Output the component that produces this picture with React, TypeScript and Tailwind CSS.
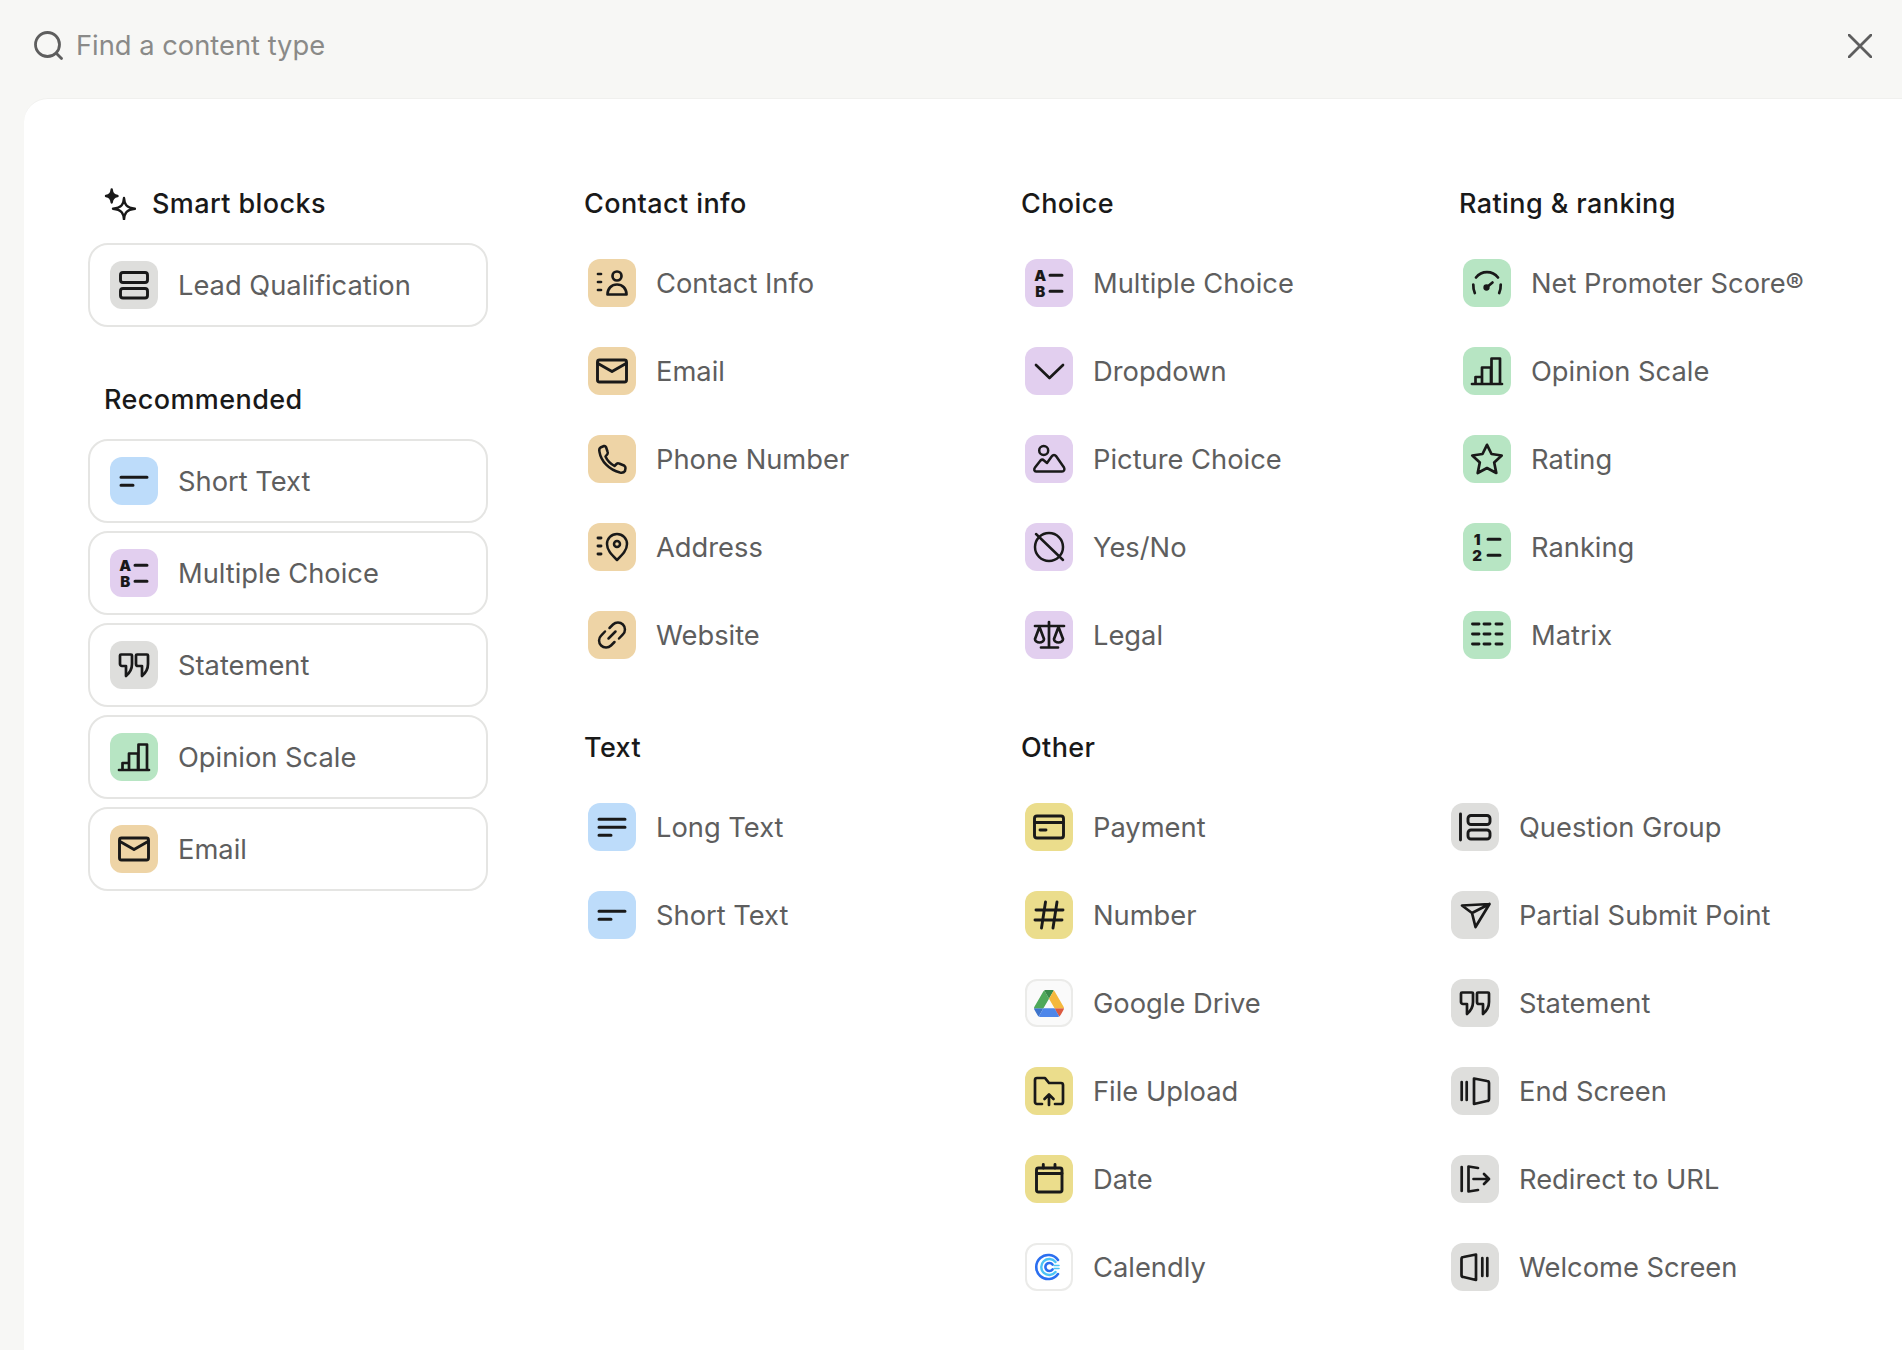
import React from 'react';

// tile colours per group
const BLUE = 'bg-[#bddcfa]';
const PURPLE = 'bg-[#e2cfef]';
const GREY = 'bg-[#dededc]';
const GREEN = 'bg-[#b7e5c3]';
const ORANGE = 'bg-[#eed4a6]';
const YELLOW = 'bg-[#ebdd8c]';
const PLAIN = 'bg-[#fafafa] border-2 border-[#ebebe9]';

function Glyph({ children, width = 2.7 }: { children: React.ReactNode; width?: number }) {
  return (
    <svg
      width="32"
      height="32"
      viewBox="0 0 32 32"
      fill="none"
      stroke="#191919"
      strokeWidth={width}
      strokeLinecap="round"
      strokeLinejoin="round"
      className="overflow-visible"
    >
      {children}
    </svg>
  );
}

const IconText = ({ x, y, children }: { x: number; y: number; children: string }) => (
  <text
    x={x}
    y={y}
    fontSize="15"
    fontWeight="900"
    fontFamily="Inter, sans-serif"
    textAnchor="middle"
    fill="#191919"
    stroke="none"
  >
    {children}
  </text>
);

const icons: Record<string, React.ReactNode> = {
  lead: (
    <Glyph width={2.9}>
      <rect x="2.5" y="3.5" width="27" height="10" rx="2.5" />
      <rect x="2.5" y="19.5" width="27" height="9.5" rx="2.5" />
    </Glyph>
  ),
  shortText: (
    <Glyph width={3}>
      <path d="M3 12.3H29M3 20.3H15" />
    </Glyph>
  ),
  longText: (
    <Glyph width={3}>
      <path d="M3 8.3H29M3 16.3H29M3 24.3H15" />
    </Glyph>
  ),
  multiple: (
    <Glyph width={3}>
      <IconText x={7.2} y={14}>A</IconText>
      <IconText x={7.2} y={30}>B</IconText>
      <path d="M17 8.3H29M17 24.3H29" />
    </Glyph>
  ),
  statement: (
    <Glyph>
      <path d="M3 5.5h10a1 1 0 0 1 1 1v8.5c0 5-3 9.5-6 12v-10H4a2 2 0 0 1-2-2V6.500a1 1 0 0 1 1-1z" />
      <path d="M19 5.500h10a1 1 0 0 1 1 1v8.500c0 5-3 9.500-6 12v-10h-4a2 2 0 0 1-2-2V6.500a1 1 0 0 1 1-1z" />
    </Glyph>
  ),
  opinion: (
    <Glyph>
      <path d="M1 29H31M4.5 29V22H11M11 29V12.5H20V29M20.5 29V3.5H29V29" />
    </Glyph>
  ),
  email: (
    <Glyph width={2.9}>
      <rect x="1.5" y="5" width="29" height="22" rx="2" />
      <path d="M2 8.5L16 16.5L30 8.5" />
    </Glyph>
  ),
  contact: (
    <Glyph>
      <path d="M2 7H5M2 15H5M2 23H5" />
      <circle cx="21" cy="9" r="4.5" />
      <path d="M11.5 27.5c0-6 4-10 9.5-10s9.500 4 9.500 10z" />
    </Glyph>
  ),
  phone: (
    <Glyph width={2.5}>
      <path d="M8 3L4.5 4.5C3 5.5 3 7 3.5 9C5 18 13 27 24 29.5C26.5 30 28 29.5 29 28L29.5 25C29.5 23.5 28.5 23 28 22.5L23 20.5C22 20 21 20.5 20.5 21L18.5 23C15 21 11 17 9.5 13.5L11.5 11C12 10 12 9.5 11.5 8.5L10 4C9.5 3 9 2.7 8 3Z" />
    </Glyph>
  ),
  address: (
    <Glyph width={2.5}>
      <path d="M2 7H5M2 15H5M2 23H5" strokeWidth={2.9} />
      <path d="M21 29C15 23 11 19 11 13a10 10 0 0 1 20 0C31 19 27 23 21 29Z" />
      <circle cx="21" cy="13" r="3" />
    </Glyph>
  ),
  website: (
    <Glyph width={2.5}>
      <path d="M13.5 9L17 5.5a7 7 0 0 1 9.9 9.9L23 19.5" />
      <path d="M18.5 23L15 26.5a7 7 0 0 1-9.9-9.9L9 12.5" />
      <path d="M12.5 19.5L19.5 12.5" />
    </Glyph>
  ),
  dropdown: (
    <Glyph>
      <path d="M3 10L16.5 23L30 10" />
    </Glyph>
  ),
  picture: (
    <Glyph width={2.5}>
      <circle cx="10.7" cy="7.5" r="4.5" />
      <path d="M3 28.5H29c2 0 3-2 2-4L23 13c-1-1.5-3-1.5-4 0L14 20L11 17.5c-1-1-2.5-1-3.5 0L2 24.5c-1.5 2-.5 4 1 4z" />
    </Glyph>
  ),
  yesNo: (
    <Glyph width={2.5}>
      <circle cx="16" cy="16" r="14" />
      <path d="M3 3L30 29" />
    </Glyph>
  ),
  legal: (
    <Glyph>
      <path d="M16 3V28.5M8 28.5H25M2 7H31" />
      <path d="M6.5 8L2 20a4.5 3.5 0 0 0 9 0Z" />
      <path d="M25.5 8L21 20a4.5 3.5 0 0 0 9 0Z" />
    </Glyph>
  ),
  nps: (
    <Glyph>
      <path d="M5 10.5A14 14 0 0 1 27 10.5" />
      <path d="M2.3 17.5C2.2 20 2.5 23 3.8 26M29.7 17.5C29.8 20 29.5 23 28.2 26" />
      <path d="M15.5 20.5L21.5 15.5" />
      <circle cx="15.5" cy="20.5" r="1.8" fill="#191919" />
    </Glyph>
  ),
  star: (
    <Glyph>
      <path d="M16 1.8L20.5 11L30.7 12.5L23.2 19.5L25.3 30L16 25L6.7 30L8.800 19.5L1.300 12.5L11.500 11Z" />
    </Glyph>
  ),
  ranking: (
    <Glyph width={3}>
      <IconText x={6.2} y={14}>1</IconText>
      <IconText x={6.2} y={30}>2</IconText>
      <path d="M17 8.3H29M17 24.3H29" />
    </Glyph>
  ),
  matrix: (
    <Glyph width={2.9}>
      <path d="M1.5 5H8M13 5H19M25 5H31M1.5 15H8M13 15H19M25 15H31M1.5 25H8M13 25H19M25 25H31" />
    </Glyph>
  ),
  payment: (
    <Glyph width={2.9}>
      <rect x="1.5" y="5" width="29" height="22" rx="2.5" />
      <path d="M2 11.5H30M7 19H13" />
    </Glyph>
  ),
  number: (
    <Glyph width={2.9}>
      <path d="M12.5 3L8.5 29M24 3L20 29M3 11H30M2 21H29" />
    </Glyph>
  ),
  drive: (
    <svg width="30" height="27" viewBox="0 0 87.3 78">
      <path d="m6.6 66.85 3.85 6.65c.8 1.4 1.95 2.5 3.3 3.3l13.75-23.8h-27.5c0 1.55.4 3.1 1.2 4.5z" fill="#3d74cb" />
      <path d="m43.65 25-13.75-23.8c-1.35.8-2.5 1.9-3.3 3.3l-25.4 44a9.06 9.06 0 0 0 -1.2 4.5h27.5z" fill="#4fa95a" />
      <path d="m73.55 76.8c1.35-.8 2.5-1.9 3.3-3.3l1.6-2.75 7.65-13.25c.8-1.4 1.2-2.95 1.2-4.5h-27.502l5.852 11.5z" fill="#db5a41" />
      <path d="m43.65 25 13.75-23.8c-1.35-.8-2.9-1.2-4.5-1.2h-18.5c-1.6 0-3.15.45-4.5 1.2z" fill="#3a8a4a" />
      <path d="m59.8 53h-32.3l-13.75 23.8c1.35.8 2.9 1.2 4.5 1.2h50.8c1.6 0 3.15-.45 4.5-1.2z" fill="#4d86ea" />
      <path d="m73.4 26.5-12.7-22c-.8-1.4-1.95-2.5-3.3-3.3l-13.75 23.8 16.15 28h27.45c0-1.55-.4-3.1-1.2-4.5z" fill="#f5b83d" />
    </svg>
  ),
  upload: (
    <Glyph>
      <path d="M9 29H4a2 2 0 0 1-2-2V5a2 2 0 0 1 2-2H12l4 5H28a2 2 0 0 1 2 2V27a2 2 0 0 1-2 2H22" />
      <path d="M16 30V20M11.5 24L16 19.5L20.5 24" />
    </Glyph>
  ),
  date: (
    <Glyph width={2.9}>
      <rect x="3.5" y="5" width="25.5" height="24" rx="2" />
      <path d="M3.5 10.5H29M10.3 1.5V5M22 1.5V5" />
    </Glyph>
  ),
  calendly: (
    <svg width="32" height="32" viewBox="0 0 32 32" fill="none" strokeLinecap="round">
      <path d="M25 9A12 12 0 1 0 25 23" stroke="#2b6ff0" strokeWidth="2.6" />
      <path d="M22.5 11A8 8 0 1 0 22.500 21" stroke="#4cc4f5" strokeWidth="2.4" />
      <path d="M19.5 13.5A4 4 0 1 0 19.500 18.500" stroke="#2b6ff0" strokeWidth="2.6" />
      <path d="M21 14.5H26M21 17.5H26" stroke="#4cc4f5" strokeWidth="1.6" />
    </svg>
  ),
  group: (
    <Glyph width={2.9}>
      <path d="M1.5 3V29" />
      <rect x="9" y="4.5" width="22" height="9" rx="3" />
      <rect x="9" y="19" width="22" height="9" rx="3" />
    </Glyph>
  ),
  partial: (
    <Glyph>
      <path d="M3 6.5L30.5 5L16.5 28L13 14ZM13 14L30.5 5" />
    </Glyph>
  ),
  end: (
    <Glyph>
      <path d="M2.7 7V25M7.7 7V25" />
      <path d="M15 3.5L28 6a2 2 0 0 1 2 2V24a2 2 0 0 1-2 2L15 29Z" />
    </Glyph>
  ),
  redirect: (
    <Glyph>
      <path d="M2.7 4V28" />
      <path d="M19 5L9.5 3.5V28.5L19 27" />
      <path d="M14.5 16H30M25 11L30 16L25 21" />
    </Glyph>
  ),
  welcome: (
    <Glyph>
      <path d="M17 3.5L4.5 6a2 2 0 0 0-2 2V24a2 2 0 0 0 2 2L17 29Z" />
      <path d="M23.3 7V25M28.3 7V25" />
    </Glyph>
  ),
};

type Block = { label: string; icon: string; tone: string };

const recommended: Block[] = [
  { label: 'Short Text', icon: 'shortText', tone: BLUE },
  { label: 'Multiple Choice', icon: 'multiple', tone: PURPLE },
  { label: 'Statement', icon: 'statement', tone: GREY },
  { label: 'Opinion Scale', icon: 'opinion', tone: GREEN },
  { label: 'Email', icon: 'email', tone: ORANGE },
];

const contactInfo: Block[] = [
  { label: 'Contact Info', icon: 'contact', tone: ORANGE },
  { label: 'Email', icon: 'email', tone: ORANGE },
  { label: 'Phone Number', icon: 'phone', tone: ORANGE },
  { label: 'Address', icon: 'address', tone: ORANGE },
  { label: 'Website', icon: 'website', tone: ORANGE },
];

const choice: Block[] = [
  { label: 'Multiple Choice', icon: 'multiple', tone: PURPLE },
  { label: 'Dropdown', icon: 'dropdown', tone: PURPLE },
  { label: 'Picture Choice', icon: 'picture', tone: PURPLE },
  { label: 'Yes/No', icon: 'yesNo', tone: PURPLE },
  { label: 'Legal', icon: 'legal', tone: PURPLE },
];

const rating: Block[] = [
  { label: 'Net Promoter Score®', icon: 'nps', tone: GREEN },
  { label: 'Opinion Scale', icon: 'opinion', tone: GREEN },
  { label: 'Rating', icon: 'star', tone: GREEN },
  { label: 'Ranking', icon: 'ranking', tone: GREEN },
  { label: 'Matrix', icon: 'matrix', tone: GREEN },
];

const text: Block[] = [
  { label: 'Long Text', icon: 'longText', tone: BLUE },
  { label: 'Short Text', icon: 'shortText', tone: BLUE },
];

const otherLeft: Block[] = [
  { label: 'Payment', icon: 'payment', tone: YELLOW },
  { label: 'Number', icon: 'number', tone: YELLOW },
  { label: 'Google Drive', icon: 'drive', tone: PLAIN },
  { label: 'File Upload', icon: 'upload', tone: YELLOW },
  { label: 'Date', icon: 'date', tone: YELLOW },
  { label: 'Calendly', icon: 'calendly', tone: 'bg-white border-2 border-[#ebebe9]' },
];

const otherRight: Block[] = [
  { label: 'Question Group', icon: 'group', tone: GREY },
  { label: 'Partial Submit Point', icon: 'partial', tone: GREY },
  { label: 'Statement', icon: 'statement', tone: GREY },
  { label: 'End Screen', icon: 'end', tone: GREY },
  { label: 'Redirect to URL', icon: 'redirect', tone: GREY },
  { label: 'Welcome Screen', icon: 'welcome', tone: GREY },
];

function Tile({ icon, tone }: { icon: string; tone: string }) {
  return (
    <span className={`flex h-[48px] w-[48px] shrink-0 items-center justify-center rounded-[12px] ${tone}`}>
      {icons[icon]}
    </span>
  );
}

function Heading({ children }: { children: React.ReactNode }) {
  return <h3 className="-ml-px whitespace-nowrap text-[27px] leading-[30px] font-medium tracking-[0.4px] text-[#191919]">{children}</h3>;
}

function Row({ block }: { block: Block }) {
  return (
    <div className="flex h-[48px] items-center gap-[20px] pl-[3px] text-[27.3px] leading-[32px] text-[#5e5e5e]">
      <Tile icon={block.icon} tone={block.tone} />
      <span className="whitespace-nowrap pt-[2px]">{block.label}</span>
    </div>
  );
}

function Card({ block }: { block: Block }) {
  return (
    <div className="flex h-[84px] items-center gap-[20px] rounded-[20px] border-2 border-[#e5e5e3] pl-[20px] text-[27.3px] leading-[32px] text-[#5e5e5e]">
      <Tile icon={block.icon} tone={block.tone} />
      <span className="whitespace-nowrap pt-[2px]">{block.label}</span>
    </div>
  );
}

function List({ blocks }: { blocks: Block[] }) {
  return (
    <div className="flex flex-col gap-[40px]">
      {blocks.map((b) => (
        <Row key={b.label} block={b} />
      ))}
    </div>
  );
}

function Section({ title, blocks }: { title: string; blocks: Block[] }) {
  return (
    <section>
      <Heading>{title}</Heading>
      <div className="mt-[40px]">
        <List blocks={blocks} />
      </div>
    </section>
  );
}

export default function App() {
  return (
    <div className="h-[1350px] w-[1902px] overflow-hidden bg-[#f7f7f5] font-['Inter',sans-serif]">
      <header className="flex h-[98px] items-center justify-between pb-[6px] pl-[32px] pr-[30px]">
        <div className="flex items-center gap-[12px]">
          <svg width="32" height="32" viewBox="0 0 32 32" fill="none" stroke="#5e5e5e" strokeWidth="2.8" strokeLinecap="round">
            <circle cx="15.5" cy="14.5" r="12" />
            <path d="M24.5 23.5L29.5 28.5" />
          </svg>
          <span className="text-[27.3px] text-[#8a8a88]">Find a content type</span>
        </div>
        <svg width="24" height="24" viewBox="0 0 24 24" fill="none" stroke="#5e5e5e" strokeWidth="2.8" strokeLinecap="round">
          <path d="M1 1L23 23M23 1L1 23" />
        </svg>
      </header>

      <main className="ml-[24px] flex h-[1252px] rounded-tl-[24px] border-t border-[#f0f0ee] bg-white pt-[90px] pl-[64px]">
        <aside className="w-[400px] shrink-0">
          <div className="flex h-[30px] items-center gap-[17px] pl-[16px]">
            <svg width="32" height="32" viewBox="0 0 32 32" fill="none" stroke="#191919" strokeWidth="2.4" strokeLinejoin="round" className="shrink-0">
              <path d="M7.7 1.5C8 5.5 9.5 7.5 13.5 8C9.5 8.5 8 10.5 7.7 14.5C7.4 10.5 6 8.5 2 8C6 7.5 7.4 5.5 7.7 1.5Z" fill="#191919" />
              <path d="M20 10C20.5 16 22 19.8 31 20.7C22 21.5 20.5 25.5 20 31.5C19.5 25.5 18 21.5 9 20.7C18 19.8 19.5 16 20 10Z" />
            </svg>
            <Heading>Smart blocks</Heading>
          </div>
          <div className="mt-[24px]">
            <Card block={{ label: 'Lead Qualification', icon: 'lead', tone: GREY }} />
          </div>
          <div className="mt-[58px] pl-[17px]">
            <Heading>Recommended</Heading>
          </div>
          <div className="mt-[24px] flex flex-col gap-[8px]">
            {recommended.map((b) => (
              <Card key={b.label} block={b} />
            ))}
          </div>
        </aside>

        <div className="ml-[97px] flex-1">
          <div className="grid grid-cols-[437px_438px_1fr]">
            <Section title="Contact info" blocks={contactInfo} />
            <Section title="Choice" blocks={choice} />
            <Section title="Rating & ranking" blocks={rating} />
          </div>
          <div className="mt-[74px] grid grid-cols-[437px_1fr]">
            <Section title="Text" blocks={text} />
            <section>
              <Heading>Other</Heading>
              <div className="mt-[40px] grid grid-cols-[426px_1fr]">
                <List blocks={otherLeft} />
                <List blocks={otherRight} />
              </div>
            </section>
          </div>
        </div>
      </main>
    </div>
  );
}
